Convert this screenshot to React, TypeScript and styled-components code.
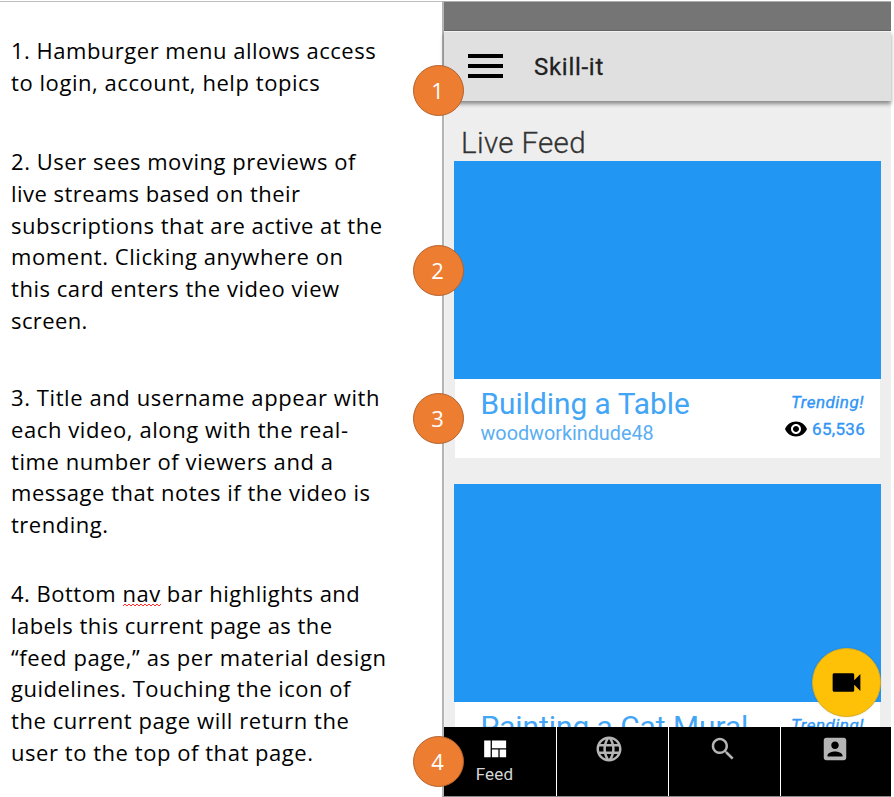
import React from "react";
import styled, { createGlobalStyle } from "styled-components";

const GlobalStyle = createGlobalStyle`
  * { box-sizing: border-box; }
  body { margin: 0; background: #fff; }
`;

const Page = styled.main`
  position: relative;
  display: flex;
  width: 894px;
  height: 797px;
  overflow: hidden;
  background: #fff;
  border-top: 1px solid #fff;
  font-family: Roboto, sans-serif;
`;

const Notes = styled.section`
  width: 442px;
  flex: none;
  padding: 33px 0 0 11px;
  border-top: 1px solid #bdbdbd;
  color: #000;
  font-family: "Open Sans", sans-serif;
  font-size: 22px;
  line-height: 31.8px;
`;

const Note = styled.p<{ $gap: number }>`
  margin: 0 0 ${(p) => p.$gap}px;
`;

const Line = styled.span<{ $tracking: number }>`
  display: block;
  white-space: pre;
  letter-spacing: ${(p) => p.$tracking}px;
`;

const Misspelled = styled.span`
  position: relative;
`;

const Squiggle = styled.svg`
  position: absolute;
  left: 1px;
  bottom: 1px;
  width: 39px;
  height: 4px;
`;

const Phone = styled.section`
  display: flex;
  flex-direction: column;
  width: 449px;
  height: 796px;
  border-top: 1px solid #adadad;
  border-left: 2px solid #b4b4b4;
  border-bottom: 1px solid #8a8a8a;
  background: linear-gradient(to right, #f4f4f4 1px, #eee 1px);
`;

const StatusBar = styled.div`
  flex: none;
  height: 29px;
  background: #757575;
  border-bottom: 1px solid #666;
`;

const AppBar = styled.header`
  position: relative;
  display: flex;
  flex: none;
  align-items: center;
  gap: 31px;
  height: 70px;
  padding: 0 0 2px 24px;
  border-top: 1px solid #f2f2f2;
  background: #e0e0e0;
  box-shadow: 0 3px 4px rgba(0, 0, 0, 0.42);
`;

const MenuButton = styled.div`
  display: flex;
  flex-direction: column;
  gap: 6px;
  width: 35px;
`;

const MenuBar = styled.span`
  height: 4px;
  background: #000;
`;

const AppTitle = styled.h1`
  margin: 0;
  padding-top: 2px;
  color: #212121;
  font-size: 24px;
  font-weight: 400;
  letter-spacing: 0.72px;
  line-height: 30px;
  -webkit-text-stroke: 0.3px #212121;
`;

const Feed = styled.div`
  flex: 1;
  min-height: 0;
  overflow: hidden;
  padding: 24px 10px 0;
`;

const Heading = styled.h2`
  margin: 0 0 0 7px;
  height: 36px;
  padding-top: 1px;
  color: #333;
  font-size: 29.5px;
  font-weight: 300;
  letter-spacing: 0.35px;
  line-height: 35px;
  -webkit-text-stroke: 0.3px #333;
`;

const Card = styled.article`
  margin-bottom: 26px;
`;

const Preview = styled.div`
  height: 218px;
  background: #2196f3;
`;

const CardBody = styled.div`
  display: flex;
  justify-content: space-between;
  height: 79px;
  margin: 0 1px;
  padding: 7px 15px 0 25.5px;
  background: #fff;
`;

const Names = styled.div`
  white-space: nowrap;
`;

const Title = styled.h3`
  margin: 0;
  color: #42a5f5;
  font-size: 29.8px;
  font-weight: 400;
  line-height: 35px;
`;

const Username = styled.div`
  padding-top: 1px;
  color: #5aaef2;
  font-size: 19.8px;
  line-height: 24px;
`;

const Stats = styled.div`
  display: flex;
  flex-direction: column;
  align-items: flex-end;
  padding-top: 6px;
  color: #3195f5;
  font-size: 17px;
  font-weight: 400;
  line-height: 20px;
  -webkit-text-stroke: 0.35px #3195f5;
`;

const Trending = styled.div`
  font-style: italic;
  letter-spacing: 0.5px;
  padding-right: 1px;
`;

const Viewers = styled.div`
  display: flex;
  align-items: center;
  gap: 4px;
  height: 24px;
  margin-top: 5px;
  letter-spacing: 0.3px;
`;

const Glyph = styled.svg<{ $size: number }>`
  display: block;
  flex: none;
  width: ${(p) => p.$size}px;
  height: ${(p) => p.$size}px;
  fill: currentColor;
`;

const Eye = styled(Glyph)`
  color: #000;
`;

const NavBar = styled.nav`
  display: grid;
  flex: none;
  grid-template-columns: 112px 111px 111px 110px;
  column-gap: 1px;
  height: 69px;
  background: #fff;
`;

const NavItem = styled.div<{ $inset: number; $active?: boolean }>`
  display: flex;
  flex-direction: column;
  align-items: center;
  padding: 7px ${(p) => p.$inset}px 0 0;
  background: #000;
  color: ${(p) => (p.$active ? "#fff" : "#b5b5b5")};
`;

const NavLabel = styled.span`
  margin-top: -1px;
  color: #d6d6d6;
  font-size: 17px;
  line-height: 20px;
  letter-spacing: 0.2px;
`;

const RecordButton = styled.div`
  position: absolute;
  left: 812px;
  top: 647px;
  display: flex;
  align-items: center;
  justify-content: center;
  width: 69px;
  height: 69px;
  border: 1px solid #dcae1c;
  border-radius: 50%;
  background: #ffc107;
  color: #000;
  box-shadow: 0 0 2px rgba(0, 0, 0, 0.15);
`;

const Callout = styled.div<{ $top: number }>`
  position: absolute;
  left: 413px;
  top: ${(p) => p.$top}px;
  display: flex;
  align-items: center;
  justify-content: center;
  width: 51px;
  height: 51px;
  padding: 0 2px 2px 0;
  border: 1px solid #b4622c;
  border-radius: 50%;
  background: #ed7d31;
  color: #fff;
  font: 22px "Open Sans", sans-serif;
`;

const paths = {
  eye: "M12 4.5C7 4.5 2.73 7.61 1 12c1.73 4.39 6 7.5 11 7.5s9.27-3.11 11-7.5c-1.73-4.39-6-7.5-11-7.5zM12 17c-2.76 0-5-2.24-5-5s2.24-5 5-5 5 2.24 5 5-2.24 5-5 5zm0-8c-1.66 0-3 1.34-3 3s1.34 3 3 3 3-1.34 3-3-1.34-3-3-3z",
  quilt: "M10 18h5v-6h-5v6zm-6 0h5V5H4v13zm12 0h5v-6h-5v6zM10 5v6h11V5H10z",
  globe:
    "M11.99 2C6.47 2 2 6.48 2 12s4.47 10 9.99 10C17.52 22 22 17.52 22 12S17.52 2 11.99 2zm6.93 6h-2.95c-.32-1.25-.78-2.45-1.38-3.56 1.84.63 3.37 1.91 4.33 3.56zM12 4.04c.83 1.2 1.48 2.53 1.91 3.96h-3.82c.43-1.43 1.08-2.76 1.91-3.96zM4.26 14C4.1 13.36 4 12.69 4 12s.1-1.36.26-2h3.38c-.08.66-.14 1.32-.14 2s.06 1.34.14 2H4.26zm.82 2h2.95c.32 1.25.78 2.45 1.38 3.56-1.84-.63-3.37-1.9-4.33-3.56zm2.95-8H5.08c.96-1.66 2.49-2.93 4.33-3.56C8.81 5.55 8.35 6.75 8.03 8zM12 19.96c-.83-1.2-1.48-2.53-1.91-3.96h3.82c-.43 1.43-1.08 2.76-1.91 3.96zM14.34 14H9.66c-.09-.66-.16-1.32-.16-2s.07-1.35.16-2h4.68c.09.65.16 1.32.16 2s-.07 1.34-.16 2zm.25 5.56c.6-1.11 1.06-2.31 1.38-3.56h2.95c-.96 1.65-2.49 2.93-4.33 3.56zM16.36 14c.08-.66.14-1.32.14-2s-.06-1.34-.14-2h3.38c.16.64.26 1.31.26 2s-.1 1.36-.26 2h-3.38z",
  search:
    "M15.5 14h-.79l-.28-.27C15.41 12.59 16 11.11 16 9.5 16 5.91 13.09 3 9.5 3S3 5.91 3 9.5 5.91 16 9.5 16c1.61 0 3.09-.59 4.23-1.57l.27.28v.79l5 4.99L20.49 19l-4.99-5zm-6 0C7.01 14 5 11.99 5 9.5S7.01 5 9.5 5 14 7.01 14 9.5 11.99 14 9.5 14z",
  account:
    "M3 5v14c0 1.1.89 2 2 2h14c1.1 0 2-.9 2-2V5c0-1.1-.9-2-2-2H5c-1.11 0-2 .9-2 2zm12 4c0 1.66-1.34 3-3 3s-3-1.34-3-3 1.34-3 3-3 3 1.34 3 3zm-9 8c0-2 4-3.1 6-3.1s6 1.1 6 3.1v1H6v-1z",
  camera:
    "M17 10.5V7c0-.55-.45-1-1-1H4c-.55 0-1 .45-1 1v10c0 .55.45 1 1 1h12c.55 0 1-.45 1-1v-3.5l4 4v-11l-4 4z",
};

const Icon = ({ name, size }: { name: keyof typeof paths; size: number }) => (
  <Glyph $size={size} viewBox="0 0 24 24">
    <path d={paths[name]} />
  </Glyph>
);

type NoteLine = [text: string, tracking: number];

const notes: { gap: number; lines: NoteLine[] }[] = [
  {
    gap: 47.4,
    lines: [
      ["1. Hamburger menu allows access", 0.5],
      ["to login, account, help topics", 0.56],
    ],
  },
  {
    gap: 45.2,
    lines: [
      ["2. User sees moving previews of", 0.55],
      ["live streams based on their", 0.462],
      ["subscriptions that are active at the", 0.489],
      ["moment. Clicking anywhere on", 0.58],
      ["this card enters the video view", 0.54],
      ["screen.", 0.4],
    ],
  },
  {
    gap: 37,
    lines: [
      ["3. Title and username appear with", 0.58],
      ["each video, along with the real-", 0.589],
      ["time number of viewers and a", 0.568],
      ["message that notes if the video is", 0.528],
      ["trending.", 0.5],
    ],
  },
  {
    gap: 0,
    lines: [
      ["4. Bottom nav bar highlights and", 0.49],
      ["labels this current page as the", 0.445],
      ["“feed page,” as per material design", 0.586],
      ["guidelines. Touching the icon of", 0.5],
      ["the current page will return the", 0.56],
      ["user to the top of that page.", 0.546],
    ],
  },
];

const squigglePath =
  "M0 3" + Array.from({ length: 19 }, (_, i) => `L${(i + 1) * 2} ${i % 2 ? 3 : 1}`).join("");

const LineText = ({ text }: { text: string }) => {
  const [before, after] = text.split(" nav ");
  if (after === undefined) return <>{text}</>;
  return (
    <>
      {before}{" "}
      <Misspelled>
        nav
        <Squiggle viewBox="0 0 39 4">
          <path d={squigglePath} fill="none" stroke="#ff2a2a" strokeWidth="1" />
        </Squiggle>
      </Misspelled>{" "}
      {after}
    </>
  );
};

const videos = [
  { title: "Building a Table", user: "woodworkindude48", viewers: "65,536" },
  { title: "Painting a Cat Mural", user: "", viewers: "" },
];

const callouts = [
  { label: 1, top: 64 },
  { label: 2, top: 244 },
  { label: 3, top: 392 },
  { label: 4, top: 735 },
];

export default function App() {
  return (
    <>
      <GlobalStyle />
      <Page>
        <Notes>
          {notes.map((note, i) => (
            <Note key={i} $gap={note.gap}>
              {note.lines.map(([text, tracking]) => (
                <Line key={text} $tracking={tracking}>
                  <LineText text={text} />
                </Line>
              ))}
            </Note>
          ))}
        </Notes>
        <Phone>
          <StatusBar />
          <AppBar>
            <MenuButton>
              <MenuBar />
              <MenuBar />
              <MenuBar />
            </MenuButton>
            <AppTitle>Skill-it</AppTitle>
          </AppBar>
          <Feed>
            <Heading>Live Feed</Heading>
            {videos.map((v) => (
              <Card key={v.title}>
                <Preview />
                <CardBody>
                  <Names>
                    <Title>{v.title}</Title>
                    {v.user && <Username>{v.user}</Username>}
                  </Names>
                  <Stats>
                    <Trending>Trending!</Trending>
                    {v.viewers && (
                      <Viewers>
                        <Eye $size={24} viewBox="0 0 24 24">
                          <path d={paths.eye} />
                        </Eye>
                        {v.viewers}
                      </Viewers>
                    )}
                  </Stats>
                </CardBody>
              </Card>
            ))}
          </Feed>
          <NavBar>
            <NavItem $active $inset={11}>
              <Icon name="quilt" size={31} />
              <NavLabel>Feed</NavLabel>
            </NavItem>
            <NavItem $inset={8}>
              <Icon name="globe" size={30} />
            </NavItem>
            <NavItem $inset={4}>
              <Icon name="search" size={30} />
            </NavItem>
            <NavItem $inset={3}>
              <Icon name="account" size={30} />
            </NavItem>
          </NavBar>
        </Phone>
        <RecordButton>
          <Icon name="camera" size={37} />
        </RecordButton>
        {callouts.map((c) => (
          <Callout key={c.label} $top={c.top}>
            {c.label}
          </Callout>
        ))}
      </Page>
    </>
  );
}
